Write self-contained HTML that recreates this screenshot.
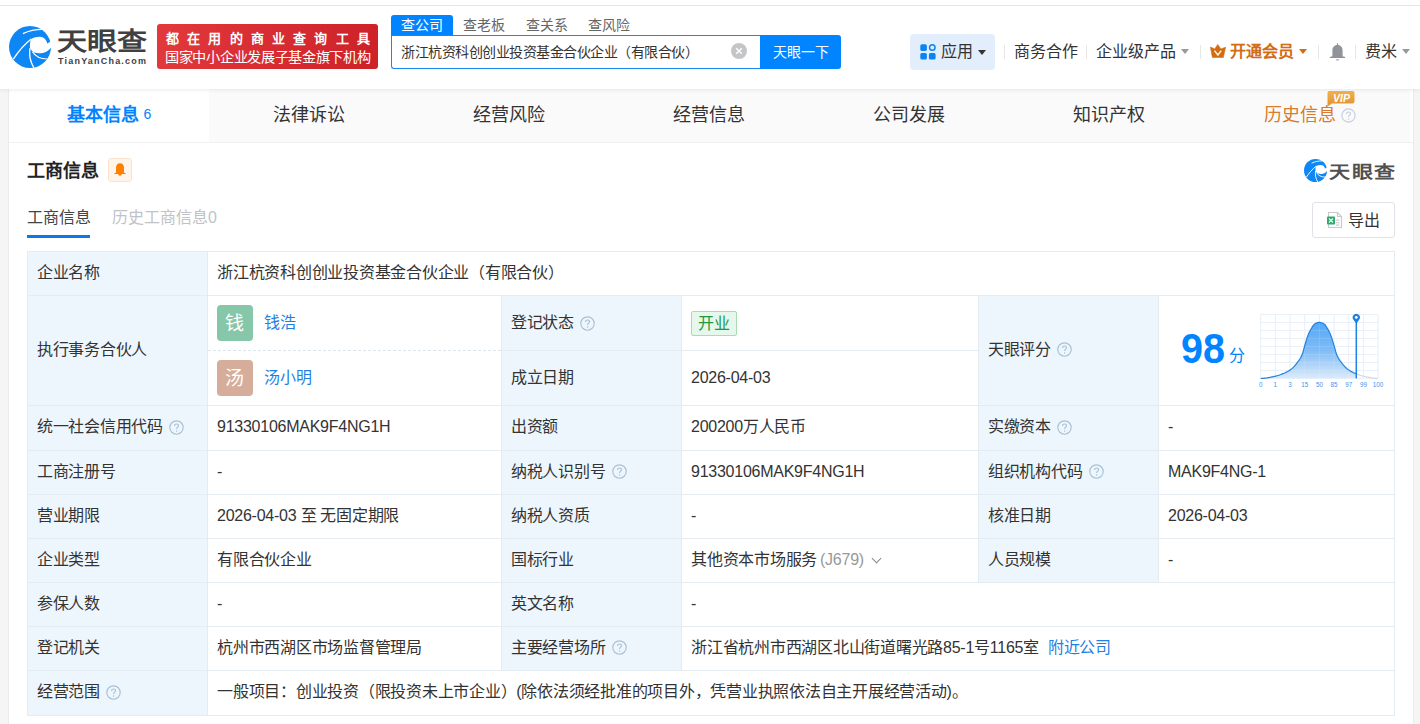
<!DOCTYPE html>
<html lang="zh-CN">
<head>
<meta charset="utf-8">
<style>
*{box-sizing:border-box;margin:0;padding:0}
html,body{width:1420px;height:724px;overflow:hidden}
body{position:relative;background:#f5f5f5;font-family:"Liberation Sans",sans-serif;color:#333;font-size:16px}
.abs{position:absolute}
.nav{top:42px;font-size:16px;line-height:20px;color:#333}
.caret{top:49px;width:0;height:0;border-left:4px solid transparent;border-right:4px solid transparent;border-top:5px solid #333}
.sep{top:45px;width:1px;height:14px;background:#e8e8e8}
#hdr{position:absolute;left:0;top:0;width:1420px;height:89px;background:#fff;box-shadow:0 1px 4px rgba(0,0,0,.08);z-index:2}
#topline{position:absolute;left:0;top:5px;width:1420px;height:1px;background:#e6e6e6}
#card{position:absolute;left:8px;top:89px;width:1406px;height:640px;background:#fff;border:1px solid #ebebeb;border-top:none}
#tabs{position:absolute;left:9px;top:89px;width:1401px;height:53px;background:#fafafa}
#tabline{position:absolute;left:9px;top:142px;width:1404px;height:1px;background:#f0f0f0}
.tab{position:absolute;top:0;height:53px;width:200px;text-align:center;font-size:18px;line-height:53px;color:#333}
.c{position:absolute;display:flex;align-items:center;padding-left:9px;padding-bottom:2px;white-space:nowrap}
.lt{font-size:16px;color:#333;line-height:20px;letter-spacing:-0.3px}
.vt{font-size:16px;color:#333;line-height:20px;letter-spacing:-0.25px}
.q{margin-left:6px;flex:none;position:relative;top:0px;left:0.5px}
.lk{color:#1f7fe3;font-size:16px;line-height:20px;letter-spacing:-0.25px}
.pr{position:absolute;left:0;width:293px;display:flex;align-items:center;padding-left:9px}
.av{display:inline-block;width:36px;height:36px;border-radius:4px;color:#fff;font-size:19px;line-height:38px;text-indent:-2px;text-align:center;margin-right:11px}
.dash{position:absolute;left:0;top:54px;width:293px;height:1px;background-image:linear-gradient(to right,#dde5ec 60%,transparent 60%);background-size:5px 1px}
.tag{display:inline-block;height:25px;line-height:23px;padding:0 6px;border:1px solid #a9dcb5;background:#e6f7eb;color:#26963f;border-radius:2px;font-size:16px}
.gr{color:#999;margin-left:3px}
.chev{display:inline-block;width:7px;height:7px;border-right:1.3px solid #888;border-bottom:1.3px solid #888;transform:rotate(45deg);margin-left:9px;position:relative;top:-3px}
</style>
</head>
<body>
<div id="hdr">
  <div id="topline"></div>
  <svg class="abs" style="left:9px;top:26px" width="42" height="42" viewBox="0 0 42 42">
    <circle cx="21" cy="21" r="21" fill="#0e86f4"/>
    <path d="M22.1 13 C27 10.5 33 10 35.5 12.5 C37.5 14.5 38.3 16.5 37.9 17.5 C39 17 40.5 16 43 15 L43 20.5 C40 25 36 27.2 32 27.2 C29 27.2 26.5 26.8 25.1 26.4 C23 25.5 21.5 23.5 21 21.5 C20.7 18.5 21.2 15 22.1 13 Z" fill="#fff"/>
    <path d="M13.9 7.6 C20 4.8 26 3.4 33 3.4" stroke="#fff" stroke-width="1.2" fill="none"/>
    <path d="M4.3 33.2 C9 26 15 18.5 22.3 13" stroke="#fff" stroke-width="1.35" fill="none"/>
    <path d="M21.1 22 C20 28 21.5 36 25 42" stroke="#fff" stroke-width="1.35" fill="none"/>
    <path d="M23.5 25.7 C26 30 31 32.8 38.5 33" stroke="#fff" stroke-width="1.2" fill="none"/>
  </svg>
  <div class="abs" style="left:57px;top:27px;font-size:30px;line-height:36px;font-weight:bold;color:#404040;letter-spacing:0px;transform:scaleY(0.83);transform-origin:0 0">天眼查</div>
  <div class="abs" style="left:58px;top:55px;font-size:9px;line-height:12px;font-weight:bold;color:#404040;letter-spacing:1.2px">TianYanCha.com</div>
  <div class="abs" style="left:157px;top:24px;width:221px;height:45px;border-radius:3px;background:linear-gradient(100deg,#e2393d,#cd2127)"></div>
  <div class="abs" style="left:166px;top:30px;font-size:13px;line-height:18px;font-weight:bold;color:#fff;letter-spacing:8.2px">都在用的商业查询工具</div>
  <div class="abs" style="left:165px;top:48px;font-size:14.2px;line-height:18px;color:#fff;letter-spacing:-0.3px">国家中小企业发展子基金旗下机构</div>
  <div class="abs" style="left:391px;top:15px;width:62px;height:21px;background:#0084ff;border-radius:3px 3px 0 0;color:#fff;font-size:14px;line-height:20px;text-align:center">查公司</div>
  <div class="abs" style="left:463px;top:15px;font-size:14px;line-height:20px;color:#666">查老板</div>
  <div class="abs" style="left:526px;top:15px;font-size:14px;line-height:20px;color:#666">查关系</div>
  <div class="abs" style="left:588px;top:15px;font-size:14px;line-height:20px;color:#666">查风险</div>
  <div class="abs" style="left:391px;top:35px;width:370px;height:34px;border:1px solid #1a86f0;border-right:none;border-radius:0 0 0 3px;background:#fff"></div>
  <div class="abs" style="left:401px;top:42px;font-size:14px;letter-spacing:-0.5px;line-height:20px;color:#333">浙江杭资科创创业投资基金合伙企业（有限合伙）</div>
  <svg class="abs" style="left:731px;top:43px" width="16" height="16" viewBox="0 0 16 16"><circle cx="8" cy="8" r="8" fill="#c3c5c9"/><path d="M5.2 5.2 L10.8 10.8 M10.8 5.2 L5.2 10.8" stroke="#fff" stroke-width="1.4"/></svg>
  <div class="abs" style="left:760px;top:35px;width:81px;height:34px;background:#0084ff;border-radius:0 3px 3px 0;color:#fff;font-size:14px;line-height:34px;text-align:center">天眼一下</div>
  <div class="abs" style="left:910px;top:34px;width:85px;height:36px;background:#e3eefc;border-radius:4px"></div>
  <svg class="abs" style="left:920px;top:44px" width="16" height="16" viewBox="0 0 16 16"><rect x="0.3" y="0.3" width="6.6" height="6.6" rx="1.6" fill="#0a84f5"/><circle cx="12.3" cy="3.6" r="2.75" fill="none" stroke="#0a84f5" stroke-width="1.5"/><rect x="0.3" y="9.1" width="6.6" height="6.5" rx="1.6" fill="#0a84f5"/><rect x="8.9" y="9.1" width="6.7" height="6.5" rx="1.6" fill="#0a84f5"/></svg>
  <div class="abs nav" style="left:941px">应用</div>
  <div class="abs caret" style="left:978px;top:50px;border-top-color:#333"></div>
  <div class="abs sep" style="left:1004px"></div>
  <div class="abs nav" style="left:1014px">商务合作</div>
  <div class="abs sep" style="left:1086px"></div>
  <div class="abs nav" style="left:1096px">企业级产品</div>
  <div class="abs caret" style="left:1181px;border-top-color:#999"></div>
  <div class="abs sep" style="left:1200px"></div>
  <svg class="abs" style="left:1210px;top:44px" width="16" height="14" viewBox="0 0 16 14"><path d="M0.4 3.1 L4.8 4.9 L7.7 0.5 L10.9 4.9 L15.6 3.3 L13.3 13.6 L2.4 13.6 Z" fill="#d46b10" stroke="#d46b10" stroke-width="0.6" stroke-linejoin="round"/><path d="M4.4 6.6 L7.9 11 L11.2 6.6" stroke="#fff3e0" stroke-width="1.5" fill="none"/></svg>
  <div class="abs nav" style="left:1230px;color:#d26c16;font-weight:bold">开通会员</div>
  <div class="abs caret" style="left:1299px;border-top-color:#d26c16"></div>
  <div class="abs sep" style="left:1318px"></div>
  <svg class="abs" style="left:1329px;top:43px" width="17" height="18" viewBox="0 0 17 18"><rect x="7.9" y="0.3" width="1.2" height="2" fill="#909399"/><path d="M8.5 2 C12 2 13.6 4.5 13.6 8 L13.6 13.2 L16.2 14 L16.2 15 L0.8 15 L0.8 14 L3.4 13.2 L3.4 8 C3.4 4.5 5 2 8.5 2 Z" fill="#909399"/><rect x="7" y="16.2" width="3" height="1.3" fill="#b0b3b8"/></svg>
  <div class="abs sep" style="left:1355px"></div>
  <div class="abs nav" style="left:1365px">费米</div>
  <div class="abs caret" style="left:1402px;border-top-color:#999"></div>
</div>
<div id="card"></div>
<div id="tabline"></div>
<div id="tabs">
  <div class="tab" style="left:0;background:#fff;color:#0084ff;font-weight:bold">基本信息<span style="font-weight:normal;font-size:14px;margin-left:5px;position:relative;top:-2px">6</span></div>
  <div class="tab" style="left:200px">法律诉讼</div>
  <div class="tab" style="left:400px">经营风险</div>
  <div class="tab" style="left:600px">经营信息</div>
  <div class="tab" style="left:800px">公司发展</div>
  <div class="tab" style="left:1000px">知识产权</div>
  <div class="tab" style="left:1200px;color:#d97a2c;padding-right:18px">历史信息<svg style="position:absolute;left:132px;top:19px" width="15" height="15" viewBox="0 0 15 15"><circle cx="7.5" cy="7.5" r="6.6" stroke="#c3ceda" stroke-width="1.1" fill="none"/><path d="M5.6 6 C5.6 4.6 6.4 4 7.5 4 C8.7 4 9.5 4.7 9.5 5.8 C9.5 7.2 7.6 7.2 7.6 9" stroke="#c3ceda" stroke-width="1.1" fill="none"/><circle cx="7.6" cy="10.9" r="0.75" fill="#c3ceda"/></svg>
  <svg style="position:absolute;left:118px;top:2px" width="28" height="16" viewBox="0 0 28 16"><defs><linearGradient id="vg" x1="0" y1="0" x2="0" y2="1"><stop offset="0" stop-color="#f3b24c"/><stop offset="1" stop-color="#e0912c"/></linearGradient></defs><path d="M2.5 0 H25.5 Q27.5 0 27.5 2 V10.5 Q27.5 12.5 25.5 12.5 H5 L0.5 15.5 V2 Q0.5 0 2.5 0 Z" fill="url(#vg)"/><text x="14.5" y="10.5" text-anchor="middle" font-family="Liberation Sans" font-weight="bold" font-style="italic" font-size="10.5" fill="#fff">VIP</text></svg></div>
</div>
<div class="abs" style="left:27px;top:159px;font-size:18px;font-weight:bold;line-height:24px;color:#222">工商信息</div>
<div class="abs" style="left:27px;top:208px;font-size:16px;line-height:20px;color:#444">工商信息</div>
<div class="abs" style="left:112px;top:208px;font-size:16px;line-height:20px;color:#bfc3c8">历史工商信息0</div>
<div class="abs" style="left:27px;top:235px;width:63px;height:3px;background:#0a7ae6"></div>
<div class="abs" style="left:108px;top:158px;width:24px;height:24px;background:#fff4e9;border:1px solid #fae3cd;border-radius:3px"></div>
<svg class="abs" style="left:114px;top:163px" width="12" height="14" viewBox="0 0 12 14"><path d="M6 0.2 C8.6 0.2 10 2.2 10 5 L10 9.8 L11.8 10.2 L11.8 11 L0.2 11 L0.2 10.2 L2 9.8 L2 5 C2 2.2 3.4 0.2 6 0.2 Z" fill="#ff8000"/><path d="M4.2 11 A1.8 1.8 0 0 0 7.8 11 Z" fill="#ff8000"/></svg>
<svg class="abs" style="left:1304px;top:159px" width="23" height="23" viewBox="0 0 42 42">
    <circle cx="21" cy="21" r="21" fill="#0e86f4"/>
    <path d="M22.1 13 C27 10.5 33 10 35.5 12.5 C37.5 14.5 38.3 16.5 37.9 17.5 C39 17 40.5 16 43 15 L43 20.5 C40 25 36 27.2 32 27.2 C29 27.2 26.5 26.8 25.1 26.4 C23 25.5 21.5 23.5 21 21.5 C20.7 18.5 21.2 15 22.1 13 Z" fill="#fff"/>
    <path d="M13.9 7.6 C20 4.8 26 3.4 33 3.4" stroke="#fff" stroke-width="1.6" fill="none"/>
    <path d="M4.3 33.2 C9 26 15 18.5 22.3 13" stroke="#fff" stroke-width="1.7" fill="none"/>
    <path d="M21.1 22 C20 28 21.5 36 25 42" stroke="#fff" stroke-width="1.7" fill="none"/>
    <path d="M23.5 25.7 C26 30 31 32.8 38.5 33" stroke="#fff" stroke-width="1.6" fill="none"/>
  </svg>
<div class="abs" style="left:1329px;top:161.5px;font-size:21px;line-height:26px;font-weight:bold;color:#505050;letter-spacing:1.5px;transform:scaleY(0.82);transform-origin:0 0">天眼查</div>
<div class="abs" style="left:1312px;top:202px;width:83px;height:36px;border:1px solid #dfe3e8;border-radius:3px;background:#fff"></div>
<svg class="abs" style="left:1326px;top:211px" width="17" height="18" viewBox="0 0 17 18"><path d="M2.5 1.5 H11.5 L15.5 5.5 V16.5 H2.5 Z" fill="#fff" stroke="#c9c9c9" stroke-width="1.1"/><path d="M11.5 1.5 V5.5 H15.5" fill="none" stroke="#c9c9c9" stroke-width="1.1"/><rect x="10" y="8.5" width="3.5" height="1.3" fill="#d0d0d0"/><rect x="10" y="11" width="3.5" height="1.3" fill="#d0d0d0"/><rect x="10" y="13.5" width="3.5" height="1.3" fill="#d0d0d0"/><rect x="1" y="5.5" width="8" height="8" rx="0.8" fill="#2ea86b"/><path d="M3 7.5 L7 11.5 M7 7.5 L3 11.5" stroke="#e8fff0" stroke-width="1.2"/></svg>
<div class="abs" style="left:1348px;top:211px;font-size:16px;line-height:20px;color:#333">导出</div>
<div id="tbl" style="position:absolute;left:27px;top:251px;width:1368px;height:465px;background:#e4ebf2"></div><div class="c" style="left:28px;top:252px;width:179px;height:43px;background:#eef6fd;"><span class="lt">企业名称</span></div>
<div class="c" style="left:208px;top:252px;width:1186px;height:43px;background:#fff;"><span class="vt">浙江杭资科创创业投资基金合伙企业（有限合伙）</span></div>
<div class="c" style="left:28px;top:296px;width:179px;height:109px;background:#eef6fd;"><span class="lt">执行事务合伙人</span></div>
<div class="c" style="left:208px;top:296px;width:293px;height:109px;background:#fff;display:block"><div class="pr" style="top:0;height:54px"><span class="av" style="background:#86c6a9">钱</span><span class="lk">钱浩</span></div>
<div class="dash"></div>
<div class="pr" style="top:55px;height:54px"><span class="av" style="background:#d5ad9a">汤</span><span class="lk">汤小明</span></div></div>
<div class="c" style="left:502px;top:296px;width:179px;height:54px;background:#eef6fd;padding-bottom:0"><span class="lt">登记状态</span><svg class="q" width="15" height="15" viewBox="0 0 15 15"><circle cx="7.5" cy="7.5" r="6.7" stroke="#a9c0d6" stroke-width="1.15" fill="none"/><path d="M5.6 6 C5.6 4.6 6.4 4 7.5 4 C8.7 4 9.5 4.7 9.5 5.8 C9.5 7.2 7.6 7.2 7.6 9" stroke="#a9c0d6" stroke-width="1.15" fill="none"/><circle cx="7.6" cy="10.9" r="0.75" fill="#a9c0d6"/></svg></div>
<div class="c" style="left:682px;top:296px;width:296px;height:54px;background:#fff;padding-bottom:0"><span class="tag">开业</span></div>
<div class="c" style="left:502px;top:351px;width:179px;height:54px;background:#eef6fd;padding-bottom:0"><span class="lt">成立日期</span></div>
<div class="c" style="left:682px;top:351px;width:296px;height:54px;background:#fff;padding-bottom:0"><span class="vt">2026-04-03</span></div>
<div class="c" style="left:979px;top:296px;width:179px;height:109px;background:#eef6fd;"><span class="lt">天眼评分</span><svg class="q" width="15" height="15" viewBox="0 0 15 15"><circle cx="7.5" cy="7.5" r="6.7" stroke="#a9c0d6" stroke-width="1.15" fill="none"/><path d="M5.6 6 C5.6 4.6 6.4 4 7.5 4 C8.7 4 9.5 4.7 9.5 5.8 C9.5 7.2 7.6 7.2 7.6 9" stroke="#a9c0d6" stroke-width="1.15" fill="none"/><circle cx="7.6" cy="10.9" r="0.75" fill="#a9c0d6"/></svg></div>
<div class="c" style="left:1159px;top:296px;width:235px;height:109px;background:#fff;display:block"></div>
<div class="c" style="left:28px;top:406px;width:179px;height:44px;background:#eef6fd;"><span class="lt">统一社会信用代码</span><svg class="q" width="15" height="15" viewBox="0 0 15 15"><circle cx="7.5" cy="7.5" r="6.7" stroke="#a9c0d6" stroke-width="1.15" fill="none"/><path d="M5.6 6 C5.6 4.6 6.4 4 7.5 4 C8.7 4 9.5 4.7 9.5 5.8 C9.5 7.2 7.6 7.2 7.6 9" stroke="#a9c0d6" stroke-width="1.15" fill="none"/><circle cx="7.6" cy="10.9" r="0.75" fill="#a9c0d6"/></svg></div>
<div class="c" style="left:208px;top:406px;width:293px;height:44px;background:#fff;"><span class="vt">91330106MAK9F4NG1H</span></div>
<div class="c" style="left:502px;top:406px;width:179px;height:44px;background:#eef6fd;"><span class="lt">出资额</span></div>
<div class="c" style="left:682px;top:406px;width:296px;height:44px;background:#fff;"><span class="vt">200200万人民币</span></div>
<div class="c" style="left:979px;top:406px;width:179px;height:44px;background:#eef6fd;"><span class="lt">实缴资本</span><svg class="q" width="15" height="15" viewBox="0 0 15 15"><circle cx="7.5" cy="7.5" r="6.7" stroke="#a9c0d6" stroke-width="1.15" fill="none"/><path d="M5.6 6 C5.6 4.6 6.4 4 7.5 4 C8.7 4 9.5 4.7 9.5 5.8 C9.5 7.2 7.6 7.2 7.6 9" stroke="#a9c0d6" stroke-width="1.15" fill="none"/><circle cx="7.6" cy="10.9" r="0.75" fill="#a9c0d6"/></svg></div>
<div class="c" style="left:1159px;top:406px;width:235px;height:44px;background:#fff;"><span class="vt">-</span></div>
<div class="c" style="left:28px;top:451px;width:179px;height:43px;background:#eef6fd;"><span class="lt">工商注册号</span></div>
<div class="c" style="left:208px;top:451px;width:293px;height:43px;background:#fff;"><span class="vt">-</span></div>
<div class="c" style="left:502px;top:451px;width:179px;height:43px;background:#eef6fd;"><span class="lt">纳税人识别号</span><svg class="q" width="15" height="15" viewBox="0 0 15 15"><circle cx="7.5" cy="7.5" r="6.7" stroke="#a9c0d6" stroke-width="1.15" fill="none"/><path d="M5.6 6 C5.6 4.6 6.4 4 7.5 4 C8.7 4 9.5 4.7 9.5 5.8 C9.5 7.2 7.6 7.2 7.6 9" stroke="#a9c0d6" stroke-width="1.15" fill="none"/><circle cx="7.6" cy="10.9" r="0.75" fill="#a9c0d6"/></svg></div>
<div class="c" style="left:682px;top:451px;width:296px;height:43px;background:#fff;"><span class="vt">91330106MAK9F4NG1H</span></div>
<div class="c" style="left:979px;top:451px;width:179px;height:43px;background:#eef6fd;"><span class="lt">组织机构代码</span><svg class="q" width="15" height="15" viewBox="0 0 15 15"><circle cx="7.5" cy="7.5" r="6.7" stroke="#a9c0d6" stroke-width="1.15" fill="none"/><path d="M5.6 6 C5.6 4.6 6.4 4 7.5 4 C8.7 4 9.5 4.7 9.5 5.8 C9.5 7.2 7.6 7.2 7.6 9" stroke="#a9c0d6" stroke-width="1.15" fill="none"/><circle cx="7.6" cy="10.9" r="0.75" fill="#a9c0d6"/></svg></div>
<div class="c" style="left:1159px;top:451px;width:235px;height:43px;background:#fff;"><span class="vt">MAK9F4NG-1</span></div>
<div class="c" style="left:28px;top:495px;width:179px;height:43px;background:#eef6fd;"><span class="lt">营业期限</span></div>
<div class="c" style="left:208px;top:495px;width:293px;height:43px;background:#fff;"><span class="vt">2026-04-03 至 无固定期限</span></div>
<div class="c" style="left:502px;top:495px;width:179px;height:43px;background:#eef6fd;"><span class="lt">纳税人资质</span></div>
<div class="c" style="left:682px;top:495px;width:296px;height:43px;background:#fff;"><span class="vt">-</span></div>
<div class="c" style="left:979px;top:495px;width:179px;height:43px;background:#eef6fd;"><span class="lt">核准日期</span></div>
<div class="c" style="left:1159px;top:495px;width:235px;height:43px;background:#fff;"><span class="vt">2026-04-03</span></div>
<div class="c" style="left:28px;top:539px;width:179px;height:43px;background:#eef6fd;"><span class="lt">企业类型</span></div>
<div class="c" style="left:208px;top:539px;width:293px;height:43px;background:#fff;"><span class="vt">有限合伙企业</span></div>
<div class="c" style="left:502px;top:539px;width:179px;height:43px;background:#eef6fd;"><span class="lt">国标行业</span></div>
<div class="c" style="left:682px;top:539px;width:296px;height:43px;background:#fff;"><span class="vt">其他资本市场服务<span class="gr">(J679)</span><span class="chev"></span></span></div>
<div class="c" style="left:979px;top:539px;width:179px;height:43px;background:#eef6fd;"><span class="lt">人员规模</span></div>
<div class="c" style="left:1159px;top:539px;width:235px;height:43px;background:#fff;"><span class="vt">-</span></div>
<div class="c" style="left:28px;top:583px;width:179px;height:43px;background:#eef6fd;"><span class="lt">参保人数</span></div>
<div class="c" style="left:208px;top:583px;width:293px;height:43px;background:#fff;"><span class="vt">-</span></div>
<div class="c" style="left:502px;top:583px;width:179px;height:43px;background:#eef6fd;"><span class="lt">英文名称</span></div>
<div class="c" style="left:682px;top:583px;width:712px;height:43px;background:#fff;"><span class="vt">-</span></div>
<div class="c" style="left:28px;top:627px;width:179px;height:43px;background:#eef6fd;"><span class="lt">登记机关</span></div>
<div class="c" style="left:208px;top:627px;width:293px;height:43px;background:#fff;"><span class="vt">杭州市西湖区市场监督管理局</span></div>
<div class="c" style="left:502px;top:627px;width:179px;height:43px;background:#eef6fd;"><span class="lt">主要经营场所</span><svg class="q" width="15" height="15" viewBox="0 0 15 15"><circle cx="7.5" cy="7.5" r="6.7" stroke="#a9c0d6" stroke-width="1.15" fill="none"/><path d="M5.6 6 C5.6 4.6 6.4 4 7.5 4 C8.7 4 9.5 4.7 9.5 5.8 C9.5 7.2 7.6 7.2 7.6 9" stroke="#a9c0d6" stroke-width="1.15" fill="none"/><circle cx="7.6" cy="10.9" r="0.75" fill="#a9c0d6"/></svg></div>
<div class="c" style="left:682px;top:627px;width:712px;height:43px;background:#fff;"><span class="vt">浙江省杭州市西湖区北山街道曙光路85-1号1165室<span class="lk" style="margin-left:9px">附近公司</span></span></div>
<div class="c" style="left:28px;top:671px;width:179px;height:44px;background:#eef6fd;"><span class="lt">经营范围</span><svg class="q" width="15" height="15" viewBox="0 0 15 15"><circle cx="7.5" cy="7.5" r="6.7" stroke="#a9c0d6" stroke-width="1.15" fill="none"/><path d="M5.6 6 C5.6 4.6 6.4 4 7.5 4 C8.7 4 9.5 4.7 9.5 5.8 C9.5 7.2 7.6 7.2 7.6 9" stroke="#a9c0d6" stroke-width="1.15" fill="none"/><circle cx="7.6" cy="10.9" r="0.75" fill="#a9c0d6"/></svg></div>
<div class="c" style="left:208px;top:671px;width:1186px;height:44px;background:#fff;"><span class="vt">一般项目：创业投资（限投资未上市企业）(除依法须经批准的项目外，凭营业执照依法自主开展经营活动)。</span></div><div class="abs" style="left:1181px;top:324px;font-size:42px;line-height:50px;font-weight:bold;color:#0084ff;transform:scaleX(0.94);transform-origin:0 0">98</div>
<div class="abs" style="left:1229px;top:346px;font-size:16px;line-height:20px;color:#0084ff">分</div>
<svg class="abs" style="left:1250px;top:305px" width="140" height="90" viewBox="0 0 140 90">
<defs><linearGradient id="cg" x1="0" y1="0" x2="0" y2="1"><stop offset="0" stop-color="#55a8f9"/><stop offset="0.5" stop-color="#7fbcf7"/><stop offset="1" stop-color="#dcebfb"/></linearGradient></defs>
<path d="M10.70 9.5 V73.4 M25.38 9.5 V73.4 M40.05 9.5 V73.4 M54.72 9.5 V73.4 M69.40 9.5 V73.4 M84.08 9.5 V73.4 M98.75 9.5 V73.4 M113.42 9.5 V73.4 M128.10 9.5 V73.4 M10.7 9.50 H128.1 M10.7 17.49 H128.1 M10.7 25.48 H128.1 M10.7 33.46 H128.1 M10.7 41.45 H128.1 M10.7 49.44 H128.1 M10.7 57.43 H128.1 M10.7 65.41 H128.1 M10.7 73.40 H128.1" stroke="#e6eef6" stroke-width="1" fill="none"/>
<path d="M10.70 73.40 L11.45 73.39 L12.20 73.37 L12.95 73.33 L13.70 73.27 L14.45 73.20 L15.20 73.12 L15.95 73.02 L16.70 72.92 L17.45 72.80 L18.20 72.67 L18.95 72.53 L19.70 72.39 L20.45 72.24 L21.20 72.09 L21.95 71.93 L22.70 71.77 L23.45 71.60 L24.20 71.44 L24.95 71.27 L25.70 71.10 L26.45 70.93 L27.20 70.73 L27.95 70.51 L28.70 70.28 L29.45 70.03 L30.20 69.77 L30.95 69.49 L31.70 69.20 L32.45 68.90 L33.20 68.60 L33.95 68.29 L34.70 67.96 L35.45 67.62 L36.20 67.26 L36.95 66.88 L37.70 66.48 L38.45 66.05 L39.20 65.60 L39.95 65.11 L40.70 64.59 L41.45 64.02 L42.20 63.38 L42.95 62.68 L43.70 61.93 L44.45 61.13 L45.20 60.28 L45.95 59.38 L46.70 58.44 L47.45 57.47 L48.20 56.46 L48.95 55.41 L49.70 54.27 L50.45 53.02 L51.20 51.60 L51.95 49.99 L52.70 47.95 L53.45 45.38 L54.20 42.61 L54.95 39.96 L55.70 37.46 L56.45 34.92 L57.20 32.51 L57.95 30.41 L58.70 28.61 L59.45 27.00 L60.20 25.56 L60.95 24.25 L61.70 22.95 L62.45 21.68 L63.20 20.52 L63.95 19.58 L64.70 18.92 L65.45 18.53 L66.20 18.18 L66.95 17.88 L67.70 17.64 L68.45 17.48 L69.20 17.40 L69.95 17.43 L70.70 17.55 L71.45 17.75 L72.20 18.01 L72.95 18.34 L73.70 18.70 L74.45 19.18 L75.20 19.99 L75.95 21.04 L76.70 22.26 L77.45 23.56 L78.20 24.85 L78.95 26.21 L79.70 27.73 L80.45 29.43 L81.20 31.34 L81.95 33.61 L82.70 36.10 L83.45 38.64 L84.20 41.16 L84.95 43.91 L85.70 46.62 L86.45 48.99 L87.20 50.77 L87.95 52.28 L88.70 53.62 L89.45 54.82 L90.20 55.91 L90.95 56.94 L91.70 57.93 L92.45 58.89 L93.20 59.80 L93.95 60.68 L94.70 61.51 L95.45 62.29 L96.20 63.02 L96.95 63.69 L97.70 64.29 L98.45 64.84 L99.20 65.34 L99.95 65.81 L100.70 66.26 L101.45 66.67 L102.20 67.06 L102.95 67.43 L103.70 67.78 L104.45 68.11 L105.20 68.43 L105.95 68.74 L106.30 68.88 L106.30 73.40 L10.70 73.40 Z" fill="url(#cg)"/>
<path d="M10.70 9.5 V73.4 M25.38 9.5 V73.4 M40.05 9.5 V73.4 M54.72 9.5 V73.4 M69.40 9.5 V73.4 M84.08 9.5 V73.4 M98.75 9.5 V73.4 M113.42 9.5 V73.4 M128.10 9.5 V73.4 M10.7 9.50 H128.1 M10.7 17.49 H128.1 M10.7 25.48 H128.1 M10.7 33.46 H128.1 M10.7 41.45 H128.1 M10.7 49.44 H128.1 M10.7 57.43 H128.1 M10.7 65.41 H128.1 M10.7 73.40 H128.1" stroke="#ffffff" stroke-opacity="0.13" stroke-width="1" fill="none"/>
<path d="M10.70 73.40 L11.45 73.39 L12.20 73.37 L12.95 73.33 L13.70 73.27 L14.45 73.20 L15.20 73.12 L15.95 73.02 L16.70 72.92 L17.45 72.80 L18.20 72.67 L18.95 72.53 L19.70 72.39 L20.45 72.24 L21.20 72.09 L21.95 71.93 L22.70 71.77 L23.45 71.60 L24.20 71.44 L24.95 71.27 L25.70 71.10 L26.45 70.93 L27.20 70.73 L27.95 70.51 L28.70 70.28 L29.45 70.03 L30.20 69.77 L30.95 69.49 L31.70 69.20 L32.45 68.90 L33.20 68.60 L33.95 68.29 L34.70 67.96 L35.45 67.62 L36.20 67.26 L36.95 66.88 L37.70 66.48 L38.45 66.05 L39.20 65.60 L39.95 65.11 L40.70 64.59 L41.45 64.02 L42.20 63.38 L42.95 62.68 L43.70 61.93 L44.45 61.13 L45.20 60.28 L45.95 59.38 L46.70 58.44 L47.45 57.47 L48.20 56.46 L48.95 55.41 L49.70 54.27 L50.45 53.02 L51.20 51.60 L51.95 49.99 L52.70 47.95 L53.45 45.38 L54.20 42.61 L54.95 39.96 L55.70 37.46 L56.45 34.92 L57.20 32.51 L57.95 30.41 L58.70 28.61 L59.45 27.00 L60.20 25.56 L60.95 24.25 L61.70 22.95 L62.45 21.68 L63.20 20.52 L63.95 19.58 L64.70 18.92 L65.45 18.53 L66.20 18.18 L66.95 17.88 L67.70 17.64 L68.45 17.48 L69.20 17.40 L69.95 17.43 L70.70 17.55 L71.45 17.75 L72.20 18.01 L72.95 18.34 L73.70 18.70 L74.45 19.18 L75.20 19.99 L75.95 21.04 L76.70 22.26 L77.45 23.56 L78.20 24.85 L78.95 26.21 L79.70 27.73 L80.45 29.43 L81.20 31.34 L81.95 33.61 L82.70 36.10 L83.45 38.64 L84.20 41.16 L84.95 43.91 L85.70 46.62 L86.45 48.99 L87.20 50.77 L87.95 52.28 L88.70 53.62 L89.45 54.82 L90.20 55.91 L90.95 56.94 L91.70 57.93 L92.45 58.89 L93.20 59.80 L93.95 60.68 L94.70 61.51 L95.45 62.29 L96.20 63.02 L96.95 63.69 L97.70 64.29 L98.45 64.84 L99.20 65.34 L99.95 65.81 L100.70 66.26 L101.45 66.67 L102.20 67.06 L102.95 67.43 L103.70 67.78 L104.45 68.11 L105.20 68.43 L105.95 68.74 L106.30 68.88" stroke="#2383e2" stroke-width="1.25" fill="none"/>
<path d="M106.30 68.88 L106.70 69.04 L107.45 69.34 L108.20 69.62 L108.95 69.89 L109.70 70.15 L110.45 70.39 L111.20 70.62 L111.95 70.83 L112.70 71.01 L113.45 71.18 L114.20 71.35 L114.95 71.51 L115.70 71.68 L116.45 71.84 L117.20 72.00 L117.95 72.16 L118.70 72.31 L119.45 72.46 L120.20 72.60 L120.95 72.73 L121.70 72.85 L122.45 72.97 L123.20 73.07 L123.95 73.16 L124.70 73.24 L125.45 73.30 L126.20 73.35 L126.95 73.38 L127.70 73.40" stroke="#d3d9df" stroke-width="1.2" fill="none"/>
<path d="M106.3 16 V73.4" stroke="#1d80e0" stroke-width="1.5"/>
<path d="M106.3 18.8 L103.3 14.5 A3.6 3.6 0 1 1 109.3 14.5 Z" fill="#1d80e0"/>
<circle cx="106.3" cy="12.4" r="1.4" fill="#fff"/>
<g font-family="Liberation Sans" font-size="6.3" fill="#3f95ec"><text x="10.70" y="82.2" text-anchor="middle">0</text><text x="25.38" y="82.2" text-anchor="middle">1</text><text x="40.05" y="82.2" text-anchor="middle">3</text><text x="54.72" y="82.2" text-anchor="middle">15</text><text x="69.40" y="82.2" text-anchor="middle">50</text><text x="84.08" y="82.2" text-anchor="middle">85</text><text x="98.75" y="82.2" text-anchor="middle">97</text><text x="113.42" y="82.2" text-anchor="middle">99</text><text x="128.10" y="82.2" text-anchor="middle">100</text></g>
</svg>
</body>
</html>
